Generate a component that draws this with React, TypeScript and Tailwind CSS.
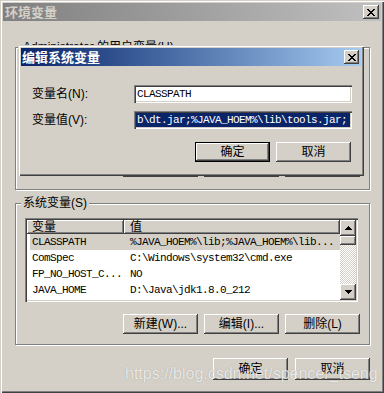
import React from "react";

const ui = "font-['Liberation_Sans','Noto_Sans_CJK_SC',sans-serif]";
const mono = "font-['Liberation_Mono','DejaVu_Sans_Mono',monospace] text-[11px] tracking-[-0.6px]";

const raised =
  "bg-[#d4d0c8] shadow-[inset_-1px_-1px_0_#404040,inset_1px_1px_0_#ffffff,inset_-2px_-2px_0_#808080]";
const sunken =
  "shadow-[inset_1px_1px_0_#808080,inset_2px_2px_0_#404040,inset_-1px_-1px_0_#ffffff,inset_-2px_-2px_0_#d4d0c8]";
const frame =
  "bg-[#d4d0c8] shadow-[inset_1px_1px_0_#d4d0c8,inset_2px_2px_0_#ffffff,inset_-1px_-1px_0_#404040,inset_-2px_-2px_0_#808080]";
const etched = "border border-[#808080] shadow-[1px_1px_0_#ffffff,inset_1px_1px_0_#ffffff]";

// pixel X used on the classic close button
const xPixels = ["11....11", ".11..11.", "..1111..", "...11...", "..1111..", ".11..11.", "11....11"];

const CloseGlyph = () => (
  <svg width="8" height="7" viewBox="0 0 8 7" shapeRendering="crispEdges">
    {xPixels.map((row, y) =>
      row.split("").map((c, x) => (c === "1" ? <rect key={`${x}-${y}`} x={x} y={y} width="1" height="1" fill="#000" /> : null))
    )}
  </svg>
);

const Arrow = ({ down }: { down?: boolean }) => (
  <svg width="7" height="4" viewBox="0 0 7 4" shapeRendering="crispEdges">
    <path d={down ? "M0 0h7L3.5 4z" : "M3.5 0L7 4H0z"} fill="#000" />
  </svg>
);

const CloseButton = ({ w }: { w: number }) => (
  <div className={`${raised} ${w === 16 ? "w-[16px]" : "w-[15px]"} h-[14px] flex items-center justify-center`}>
    <CloseGlyph />
  </div>
);

const Button = ({ label, def, h = "h-[20px]" }: { label: string; def?: boolean; h?: string }) => (
  <div className={`w-[75px] ${h} ${def ? "border border-black" : ""}`}>
    <div className={`${raised} w-full h-full flex items-center justify-center text-[12px] text-black`}>{label}</div>
  </div>
);

const rows = [
  ["CLASSPATH", "%JAVA_HOEM%\\lib;%JAVA_HOEM%\\lib..."],
  ["ComSpec", "C:\\Windows\\system32\\cmd.exe"],
  ["FP_NO_HOST_C...", "NO"],
  ["JAVA_HOME", "D:\\Java\\jdk1.8.0_212"],
];

const VarList = () => (
  <div className={`${sunken} bg-white w-[333px] h-[84px] p-[2px] flex`}>
    <div className="flex-1 flex flex-col overflow-hidden">
      <div className="flex h-[14px] text-[12px] leading-[14px]">
        <div className={`${raised} w-[97px] pl-[5px]`}>变量</div>
        <div className={`${raised} flex-1 pl-[6px]`}>值</div>
      </div>
      {rows.map(([name, value], i) => (
        <div key={name} className="h-[16px] pl-[3px] flex">
          <div className={`flex-1 flex items-center pl-[2px] ${i === 0 ? "bg-[#d4d0c8]" : ""} ${mono} text-black whitespace-nowrap`}>
            <span className="w-[98px]">{name}</span>
            <span>{value}</span>
          </div>
        </div>
      ))}
    </div>
    <div className="w-[16px] flex flex-col">
      <div className={`${raised} h-[16px] flex items-center justify-center`}>
        <Arrow />
      </div>
      <div className={`${raised} h-[9px]`} />
      <div className="flex-1 bg-[repeating-conic-gradient(#ffffff_0%_25%,#d4d0c8_0%_50%)] bg-[length:2px_2px]" />
      <div className={`${raised} h-[16px] flex items-center justify-center`}>
        <Arrow down />
      </div>
    </div>
  </div>
);

export default function App() {
  return (
    <div className={`${ui} ${frame} relative w-[384px] h-[393px] p-[3px] flex flex-col overflow-hidden`}>
      {/* outer window title (inactive) */}
      <div className="h-[18px] flex items-center justify-between pl-[2px] pr-[2px] bg-gradient-to-r from-[#808080] to-[#c0c0c0]">
        <span className="text-[13px] font-bold text-[#d4d0c8] leading-none">环境变量</span>
        <CloseButton w={16} />
      </div>

      {/* user variables group, mostly covered by the edit dialog */}
      <div className={`${etched} relative ml-[12px] mr-[11px] mt-[26px] h-[143px] flex flex-col justify-end pb-[12px] pr-[9px]`}>
        <span className="absolute left-[5px] -top-[8px] bg-[#d4d0c8] px-[2px] text-[12px] leading-[14px]">
          Administrator 的用户变量(U)
        </span>
        <div className="flex justify-end gap-[6px]">
          <Button label="新建(N)..." />
          <Button label="编辑(E)..." />
          <Button label="删除(D)" />
        </div>
      </div>

      {/* system variables group */}
      <div className={`${etched} relative ml-[12px] mr-[11px] mt-[13px] h-[142px] pl-[9px] pr-[9px] pt-[14px]`}>
        <span className="absolute left-[5px] -top-[8px] bg-[#d4d0c8] px-[2px] text-[12px] leading-[14px]">系统变量(S)</span>
        <VarList />
        <div className="flex justify-end gap-[6px] mt-[12px]">
          <Button label="新建(W)..." />
          <Button label="编辑(I)..." />
          <Button label="删除(L)" />
        </div>
      </div>

      <div className="flex justify-end gap-[7px] mt-[13px] mr-[11px]">
        <Button label="确定" h="h-[22px]" />
        <Button label="取消" h="h-[22px]" />
      </div>

      {/* edit dialog on top */}
      <div className={`${frame} absolute left-[18px] top-[45px] w-[346px] h-[131px] p-[3px] flex flex-col`}>
        <div className="h-[18px] flex items-center justify-between pl-[1px] pr-[2px] bg-gradient-to-r from-[#0a246a] to-[#a6caf0]">
          <span className="text-[13px] font-bold text-white leading-none">编辑系统变量</span>
          <CloseButton w={15} />
        </div>
        <div className="pl-[11px] pr-[9px] pt-[19px] text-[12px] text-black">
          <div className="flex items-center h-[18px]">
            <span className="w-[102px]">变量名(N):</span>
            <div className={`${sunken} bg-white w-[218px] h-[18px] p-[2px]`}>
              <div className={`${mono} h-full pl-[1px] flex items-center whitespace-nowrap`}>CLASSPATH</div>
            </div>
          </div>
          <div className="flex items-center h-[18px] mt-[8px]">
            <span className="w-[102px]">变量值(V):</span>
            <div className={`${sunken} bg-white w-[218px] h-[18px] p-[2px]`}>
              <div className={`${mono} h-full pl-[1px] flex items-center whitespace-nowrap overflow-hidden bg-[#0a246a] text-white`}>
                b\dt.jar;%JAVA_HOEM%\lib\tools.jar;
              </div>
            </div>
          </div>
          <div className="flex justify-end gap-[6px] mt-[13px] pr-[1px]">
            <Button label="确定" def />
            <Button label="取消" />
          </div>
        </div>
      </div>

      {/* watermark */}
      <span className="absolute left-[125px] top-[362px] text-[16px] font-['Liberation_Sans',sans-serif] text-white/80 [text-shadow:0_0_1px_rgba(0,0,0,0.35)] whitespace-nowrap pointer-events-none">
        https://blog.csdn.net/spencer_tseng
      </span>
    </div>
  );
}
